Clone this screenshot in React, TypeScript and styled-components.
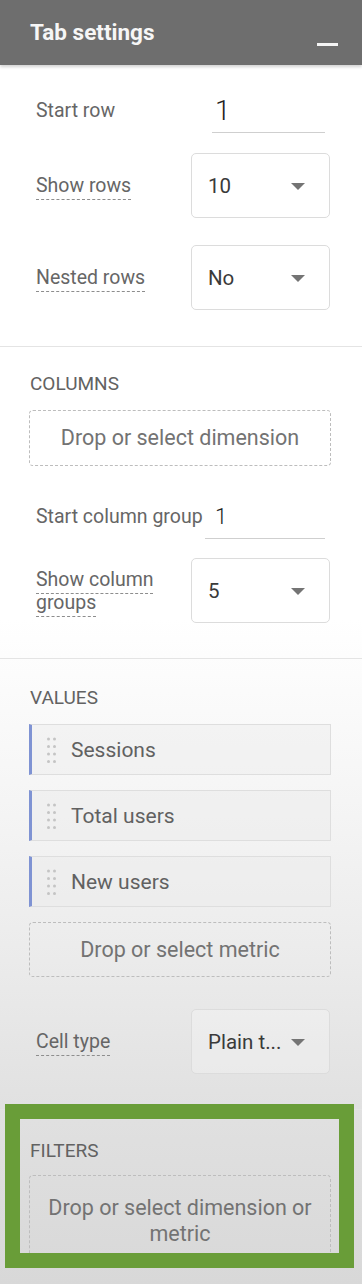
import React from 'react';
import styled, { createGlobalStyle } from 'styled-components';

const GlobalStyle = createGlobalStyle`
  html, body {
    margin: 0;
    padding: 0;
  }
  body {
    font-family: Roboto, "Liberation Sans", Arial, sans-serif;
    background: linear-gradient(
      to bottom,
      #ffffff 0,
      #ffffff 620px,
      #f5f5f5 800px,
      #ebebeb 960px,
      #e0e0e0 1120px,
      #d8d8d8 1284px
    );
    min-height: 1284px;
  }
`;

const Panel = styled.div`
  width: 362px;
  height: 1284px;
  overflow: hidden;
  display: flex;
  flex-direction: column;
`;

const Header = styled.div`
  height: 65px;
  flex: none;
  display: flex;
  align-items: center;
  justify-content: space-between;
  padding: 0 24px 0 30px;
  box-sizing: border-box;
  background: #6e6e6e;
  box-shadow: 0 2px 3px rgba(0, 0, 0, 0.18);
  position: relative;
  z-index: 1;
`;

const Title = styled.div`
  color: #f6f6f6;
  font-size: 22.5px;
  font-weight: 700;
  margin-top: -2px;
`;

const Minimize = styled.button`
  width: 21px;
  height: 3px;
  padding: 0;
  border: none;
  background: #f4f4f4;
  margin-top: 24px;
`;

const Section = styled.div<{ $top: number; $bottom: number; $last?: boolean }>`
  position: relative;
  display: flex;
  flex-direction: column;
  padding: ${(p) => p.$top}px 0 ${(p) => p.$bottom}px;
  border-bottom: ${(p) => (p.$last ? 'none' : '1px solid #e4e4e4')};
`;

const Heading = styled.div<{ $gap: number }>`
  padding-left: 30px;
  margin-bottom: ${(p) => p.$gap}px;
  font-size: 19px;
  line-height: 18px;
  font-weight: 400;
  color: #626262;
  text-transform: uppercase;
`;

const FieldRow = styled.div<{ $gap?: number }>`
  display: flex;
  align-items: center;
  padding: 0 32px 0 36px;
  margin-top: ${(p) => p.$gap ?? 0}px;
`;

const Label = styled.span<{ $dashed?: boolean }>`
  flex: 1;
  font-size: 19.5px;
  line-height: 23px;
  color: #666;
  white-space: pre-line;
  text-decoration: ${(p) => (p.$dashed ? 'underline dashed #8d8d8d' : 'none')};
  text-decoration-thickness: 1px;
  text-underline-offset: 7px;
`;

const NumberInput = styled.div<{ $width: number; $pad: number; $size: number }>`
  width: ${(p) => p.$width}px;
  height: 45px;
  margin-right: 5px;
  box-sizing: border-box;
  display: flex;
  align-items: center;
  padding-left: ${(p) => p.$pad}px;
  border-bottom: 1px solid #cfcfcf;
  font-size: ${(p) => p.$size}px;
  font-weight: 300;
  color: #222;
`;

const SelectBox = styled.div`
  width: 139px;
  height: 65px;
  flex: none;
  box-sizing: border-box;
  display: flex;
  align-items: center;
  justify-content: space-between;
  padding: 0 24px 0 16px;
  border: 1px solid #dcdcdc;
  border-radius: 5px;
  background: rgba(255, 255, 255, 0.25);
  font-size: 20.5px;
  color: #3a3a3a;
`;

const Arrow = styled.span`
  width: 0;
  height: 0;
  border-left: 7px solid transparent;
  border-right: 7px solid transparent;
  border-top: 7px solid #747474;
  margin-top: 2px;
`;

const DropZone = styled.div<{ $height: number; $gap?: number }>`
  margin: ${(p) => p.$gap ?? 0}px 31px 0 29px;
  height: ${(p) => p.$height}px;
  flex: none;
  box-sizing: border-box;
  display: flex;
  align-items: center;
  justify-content: center;
  padding: 0 8px;
  border: 1px dashed #bdbdbd;
  border-radius: 4px;
  font-size: 21.5px;
  line-height: 26px;
  color: #737373;
  text-align: center;
`;

const Chip = styled.div<{ $gap?: number }>`
  margin: ${(p) => p.$gap ?? 0}px 31px 0 29px;
  height: 51px;
  box-sizing: border-box;
  display: flex;
  align-items: center;
  gap: 14px;
  padding-left: 15px;
  border: 1px solid #dedede;
  border-left: 3px solid #7f93d3;
  background: rgba(236, 236, 236, 0.45);
  font-size: 21px;
  color: #616161;
`;

const Highlight = styled.div`
  position: absolute;
  top: -6px;
  left: 5px;
  width: 349px;
  height: 164px;
  box-sizing: border-box;
  border: 15px solid #699d38;
  pointer-events: none;
`;

const DragHandle: React.FC = () => (
  <svg width="10" height="26" viewBox="0 0 10 26" fill="#c4c4c4">
    {[0, 1, 2, 3].map((r) =>
      [0, 1].map((c) => <circle key={`${r}-${c}`} cx={1.5 + c * 6} cy={2 + r * 7.5} r="1.5" />)
    )}
  </svg>
);

const metrics = ['Sessions', 'Total users', 'New users'];

const App: React.FC = () => {
  return (
    <>
      <GlobalStyle />
      <Panel>
        <Header>
          <Title>Tab settings</Title>
          <Minimize aria-label="Minimize" />
        </Header>

        <Section $top={23} $bottom={36}>
          <FieldRow>
            <Label>Start row</Label>
            <NumberInput $width={113} $pad={3} $size={28}>1</NumberInput>
          </FieldRow>
          <FieldRow $gap={20}>
            <Label $dashed>Show rows</Label>
            <SelectBox>
              10
              <Arrow />
            </SelectBox>
          </FieldRow>
          <FieldRow $gap={27}>
            <Label $dashed>Nested rows</Label>
            <SelectBox>
              No
              <Arrow />
            </SelectBox>
          </FieldRow>
        </Section>

        <Section $top={28} $bottom={35}>
          <Heading $gap={17}>Columns</Heading>
          <DropZone $height={56}>Drop or select dimension</DropZone>
          <FieldRow $gap={28}>
            <Label>Start column group</Label>
            <NumberInput $width={120} $pad={10} $size={22}>1</NumberInput>
          </FieldRow>
          <FieldRow $gap={19}>
            <Label $dashed>{'Show column\ngroups'}</Label>
            <SelectBox>
              5
              <Arrow />
            </SelectBox>
          </FieldRow>
        </Section>

        <Section $top={30} $bottom={35}>
          <Heading $gap={17}>Values</Heading>
          {metrics.map((m, i) => (
            <Chip key={m} $gap={i === 0 ? 0 : 15}>
              <DragHandle />
              {m}
            </Chip>
          ))}
          <DropZone $height={55} $gap={15}>Drop or select metric</DropZone>
          <FieldRow $gap={32}>
            <Label $dashed>Cell type</Label>
            <SelectBox>
              Plain t...
              <Arrow />
            </SelectBox>
          </FieldRow>
        </Section>

        <Section $top={32} $bottom={0} $last>
          <Heading $gap={15}>Filters</Heading>
          <DropZone $height={92}>Drop or select dimension or metric</DropZone>
          <Highlight />
        </Section>
      </Panel>
    </>
  );
};

export default App;
